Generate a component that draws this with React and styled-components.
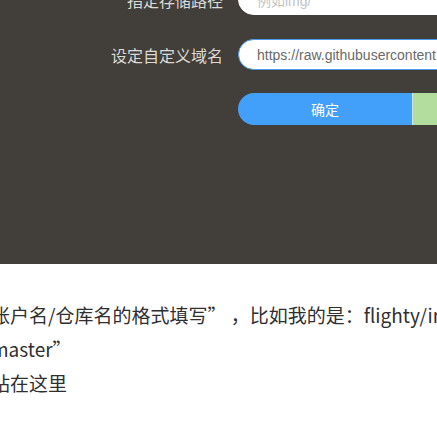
import React from "react";
import styled, { createGlobalStyle } from "styled-components";

const Global = createGlobalStyle`
  html, body {
    margin: 0;
    padding: 0;
    background: #fff;
    overflow: hidden;
  }
  body {
    font-family: "Noto Sans CJK SC", "Liberation Sans", sans-serif;
  }
`;

const Shot = styled.div`
  height: 264px;
  background: #423e39;
  overflow: hidden;
`;

const Form = styled.div`
  display: grid;
  grid-template-columns: 223px 280px;
  grid-auto-rows: 31px;
  column-gap: 15px;
  row-gap: 24px;
  margin-top: -16px;
`;

const Label = styled.div`
  display: flex;
  align-items: center;
  justify-content: flex-end;
  color: #dcdad6;
  font-size: 16px;
  font-family: "Noto Sans CJK SC", sans-serif;
  white-space: nowrap;
`;

const Field = styled.div`
  display: flex;
  align-items: center;
  box-sizing: border-box;
  padding-left: 18px;
  background: #fff;
  border-radius: 16px 0 0 16px;
  border: 1px solid ${(p) => (p.$active ? "#4a9bf0" : "#fff")};
  color: ${(p) => (p.$placeholder ? "#c4c4c4" : "#6a6a6a")};
  font-size: 14px;
  font-family: "Liberation Sans", "Noto Sans CJK SC", sans-serif;
  white-space: nowrap;
  overflow: hidden;
`;

const Buttons = styled.div`
  grid-column: 2;
  display: flex;
  margin-top: -1px;
  height: 32px;
`;

const Btn = styled.div`
  display: flex;
  align-items: center;
  justify-content: center;
  width: ${(p) => p.$w}px;
  flex: none;
  background: ${(p) => p.$bg};
  border-radius: ${(p) => (p.$first ? "16px 0 0 16px" : "0")};
  border-right: ${(p) => (p.$first ? "1px solid #cfe6f7" : "none")};
  color: #fff;
  font-size: 14px;
  font-family: "Noto Sans CJK SC", sans-serif;
`;

const Article = styled.div`
  padding-top: 34px;
  margin-left: -9px;
  color: #2f2f2f;
  font-size: 19px;
  line-height: 34px;
  font-family: "Noto Sans CJK SC", sans-serif;
`;

const Line = styled.div`
  white-space: nowrap;
`;

export default function App() {
  return (
    <>
      <Global />
      <Shot>
        <Form>
          <Label>指定存储路径</Label>
          <Field $placeholder>例如img/</Field>
          <Label>设定自定义域名</Label>
          <Field $active>https://raw.githubusercontent.com/</Field>
          <Buttons>
            <Btn $first $w={174} $bg="#42a0fa">确定</Btn>
            <Btn $w={120} $bg="#b3dd9d">取消</Btn>
          </Buttons>
        </Form>
      </Shot>
      <Article>
        <Line>账户名/仓库名的格式填写” ，比如我的是：flighty/images</Line>
        <Line>master”</Line>
        <Line>站在这里</Line>
      </Article>
    </>
  );
}
